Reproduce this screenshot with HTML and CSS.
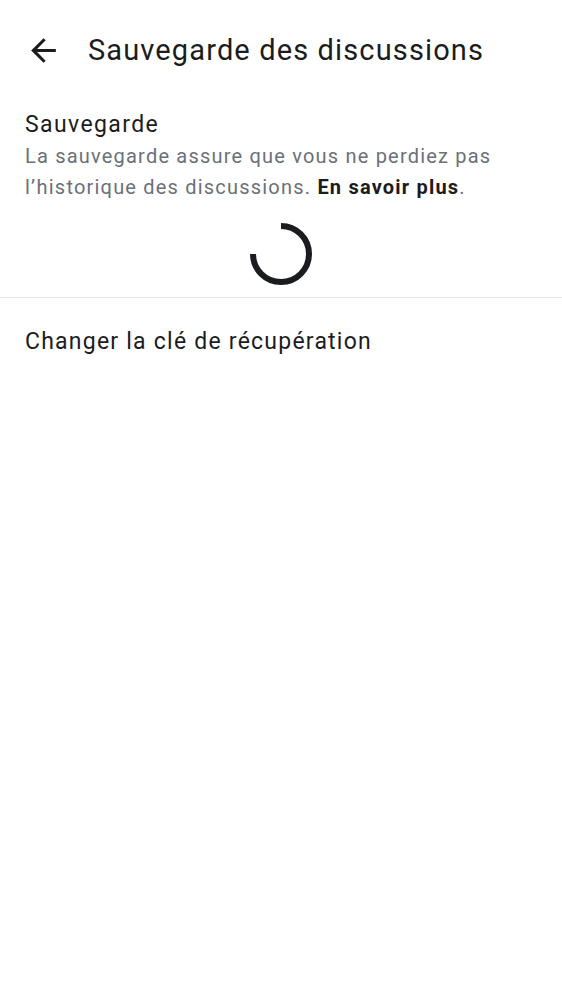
FILE: index.html
```html
<!DOCTYPE html>
<html lang="fr">
<head>
<meta charset="utf-8">
<link rel="stylesheet" href="styles.css">
</head>
<body>
<header class="topbar">
  <button class="back" aria-label="Retour">
    <svg width="37" height="37" viewBox="0 0 24 24"><path d="M20 11H7.83l5.59-5.59L12 4l-8 8 8 8 1.41-1.41L7.83 13H20v-2z" fill="#1b1c20"/></svg>
  </button>
  <h1 class="title">Sauvegarde des discussions</h1>
</header>
<section class="backup">
  <div class="label">Sauvegarde</div>
  <p class="desc">La sauvegarde assure que vous ne perdiez pas l’historique des discussions. <b>En savoir plus</b>.</p>
  <div class="spinner-wrap">
    <svg width="64" height="64" viewBox="0 0 64 64"><path d="M32 4 A28 28 0 1 1 4 32" fill="none" stroke="#1b1c20" stroke-width="6"/></svg>
  </div>
</section>
<div class="divider"></div>
<div class="item">Changer la clé de récupération</div>
</body>
</html>
```
FILE: styles.css
```css
html, body { margin: 0; padding: 0; background: #fff; }
body { font-family: Roboto, "Noto Sans", sans-serif; color: #1b1c20; width: 562px; }
.topbar { display: flex; align-items: center; height: 100px; padding-left: 25px; }
.back { background: none; border: 0; padding: 0; width: 37px; height: 37px; display: flex; }
.title { margin: 0 0 0 26px; font-size: 29px; font-weight: 400; letter-spacing: 1.13px; }
.backup { padding: 8px 25px 0; }
.label { font-size: 23px; line-height: 33px; letter-spacing: 1.4px; }
.desc { margin: 0; font-size: 20px; line-height: 31px; color: #6b7079; letter-spacing: 1.2px; padding-right: 40px; }
.desc b { color: #1b1c20; font-weight: 700; }
.spinner-wrap { display: flex; justify-content: center; padding: 19px 0 12px; }
.divider { height: 1px; background: #e3e3e3; margin-top: -1px; }
.item { padding: 28px 25px; font-size: 23px; line-height: 32px; letter-spacing: 1.23px; }
```
